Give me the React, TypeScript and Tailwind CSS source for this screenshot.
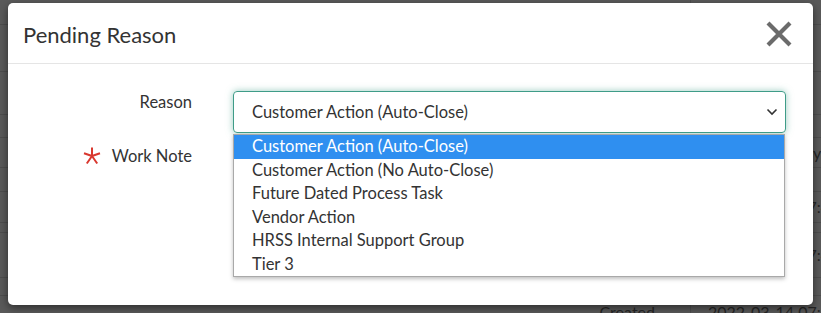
import React from 'react';

interface BgRow {
  h: number;
  label?: string;
  value?: string;
  pad?: number;
}

const bgRows: BgRow[] = [
  { h: 25 },
  { h: 47 },
  { h: 43 },
  { h: 23 },
  { h: 30, value: 'y', pad: 105 },
  { h: 24 },
  { h: 31, value: '2022-03-14 07:4' },
  { h: 10 },
  { h: 45, value: '2022-03-14 07:4' },
  { h: 18 },
  { h: 32, label: 'Created', value: '2022-03-14 07:4' },
];

const options = [
  'Customer Action (Auto-Close)',
  'Customer Action (No Auto-Close)',
  'Future Dated Process Task',
  'Vendor Action',
  'HRSS Internal Support Group',
  'Tier 3',
];

const CloseIcon = (): JSX.Element => (
  <svg width="28" height="28" viewBox="0 0 28 28" fill="none">
    <path d="M3 3 L25 25 M25 3 L3 25" stroke="#6b6b6b" strokeWidth="4.2" strokeLinecap="butt" />
  </svg>
);

const Chevron = (): JSX.Element => (
  <svg width="12" height="8" viewBox="0 0 12 8" fill="none">
    <path d="M1.5 1.5 L6 6 L10.5 1.5" stroke="#333" strokeWidth="1.6" />
  </svg>
);

const Asterisk = (): JSX.Element => (
  <svg width="18" height="18" viewBox="0 0 18 18" fill="none">
    <path d="M9 0.5 V9 M9 9 L1 6.2 M9 9 L17 6.2 M9 9 L3.8 16.5 M9 9 L14.2 16.5" stroke="#d9382f" strokeWidth="2" />
  </svg>
);

const App = (): JSX.Element => {
  return (
    <div
      className="relative w-[821px] h-[313px] overflow-hidden bg-[#5a5a5a] text-[#333]"
      style={{ fontFamily: 'Lato, "Liberation Sans", sans-serif' }}
    >
      {/* page underneath the overlay */}
      <div className="flex flex-col">
        {bgRows.map((row, i) => (
          <div
            key={i}
            className="grid grid-cols-[690px_1fr] border-b border-[#4e4e4e] shrink-0"
            style={{ height: row.h }}
          >
            <div className="flex items-center justify-end pr-[35px] text-[16px] text-[#262626]">{row.label}</div>
            <div className="flex items-center border-l border-[#4e4e4e] pl-[17px] text-[16px] text-[#262626] whitespace-nowrap">
              <span style={{ paddingLeft: row.pad ?? 0 }}>{row.value}</span>
            </div>
          </div>
        ))}
      </div>

      {/* modal */}
      <div className="absolute left-[8px] top-[3px] w-[805px] h-[302px] bg-white rounded-[5px] shadow-[0_3px_9px_rgba(0,0,0,0.5)]">
        <div className="h-[61px] flex items-center justify-between pl-[15px] pr-[20px] pt-[2px] border-b border-[#e5e5e5]">
          <h2 className="text-[22px] text-[#333] font-normal">Pending Reason</h2>
          <CloseIcon />
        </div>

        <div className="pt-[27px] pr-[27px]">
          <div className="grid grid-cols-[184px_1fr] gap-x-[41px] items-start">
            <div className="text-right text-[16.5px] leading-6 -mt-[1px]">Reason</div>
            <div className="relative">
              <div className="h-[42px] flex items-center justify-between pl-[18px] pr-[7px] border border-[#3f9c88] rounded-[4px] shadow-[0_0_7px_rgba(70,160,140,0.55)] text-[16.5px]">
                <span>Customer Action (Auto-Close)</span>
                <Chevron />
              </div>
              <ul className="absolute left-0 top-[43px] w-[552px] z-10 bg-white border border-[#a9a9a9] shadow-[0_2px_4px_rgba(0,0,0,0.25)] py-0">
                {options.map((opt, i) => (
                  <li
                    key={opt}
                    className={`h-[23.5px] flex items-center pl-[18px] text-[16.5px] ${
                      i === 0 ? 'bg-[#2f8ff0] text-white' : 'text-[#333]'
                    }`}
                  >
                    {opt}
                  </li>
                ))}
              </ul>
            </div>

            <div className="flex items-center justify-end gap-[11px] mt-[11px] text-[16.5px] leading-6">
              <Asterisk />
              <span>Work Note</span>
            </div>
            <div />
          </div>
        </div>
      </div>
    </div>
  );
};

export default App;
